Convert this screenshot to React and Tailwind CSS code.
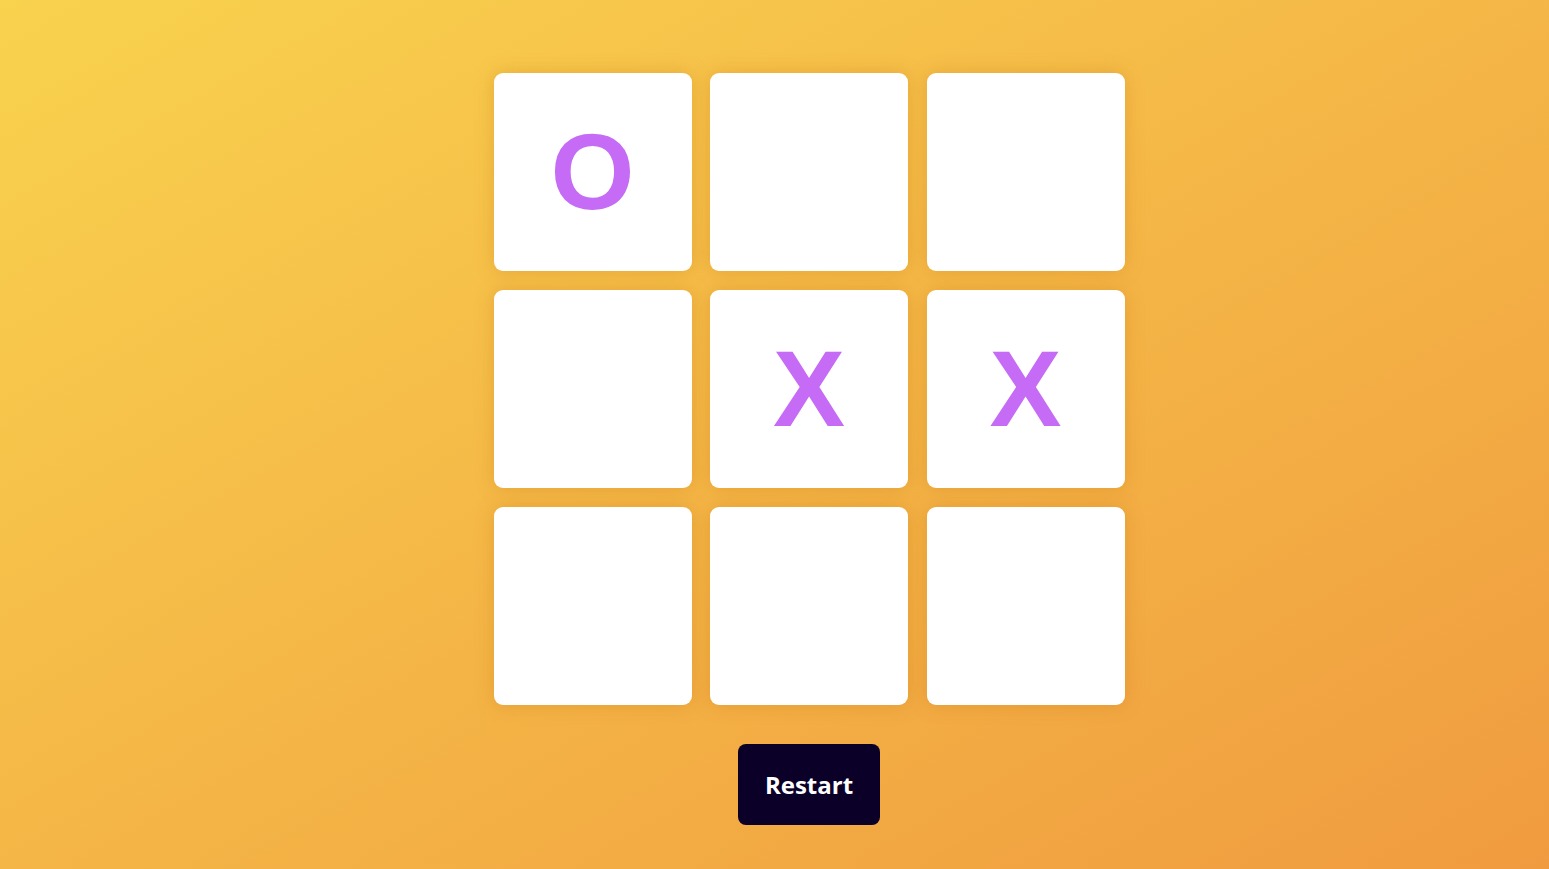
import React, { useState } from 'react';

const initial = ['O', '', '', '', 'X', 'X', '', '', ''];

const Cell = ({ value, onClick }) => (
    <button
        onClick={onClick}
        className="w-[198px] h-[198px] bg-white rounded-[9px] shadow-[0_0_18px_rgba(200,120,20,0.35)] flex items-center justify-center text-[#c56bf5] text-[108px] leading-none font-bold"
        style={{ fontFamily: '"Liberation Sans", Arial, sans-serif' }}
    >
        {value}
    </button>
);

const App = () => {
    const [board, setBoard] = useState(initial);

    const handleRestart = () => setBoard(Array(9).fill(''));

    return (
        <div className="min-h-[869px] w-full bg-[linear-gradient(to_bottom_right,#f9d24e,#f09b3f)] flex flex-col items-center pt-[73px] pl-[69px]">
            <div className="grid grid-cols-[repeat(3,198px)] gap-x-[18.5px] gap-y-[19px]">
                {board.map((v, i) => (
                    <Cell key={i} value={v} />
                ))}
            </div>
            <button
                onClick={handleRestart}
                className="mt-[39px] w-[142px] h-[81px] bg-[#0a0028] text-white rounded-lg text-[24px] font-bold"
                style={{ fontFamily: '"Open Sans", "Liberation Sans", sans-serif' }}
            >
                Restart
            </button>
        </div>
    );
};

export default App;
